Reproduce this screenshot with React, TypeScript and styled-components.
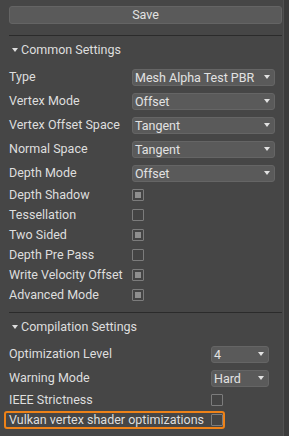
import styled, { createGlobalStyle } from "styled-components";

const GlobalStyle = createGlobalStyle`
  html, body {
    margin: 0;
    padding: 0;
    background: #464646;
  }
  body {
    font-family: Roboto, "Noto Sans", sans-serif;
    font-size: 12.5px;
    color: #dedede;
  }
`;

const Frame = styled.div`
  display: flex;
  flex-direction: row;
  width: 289px;
  height: 436px;
  overflow: hidden;
`;

const Panel = styled.div`
  display: flex;
  flex-direction: column;
  width: 273px;
  padding: 6px 1px 0 9px;
  background: #464646;
`;

const ScrollTrack = styled.div`
  width: 5px;
  background: #3b3b3b;
  border-left: 1px solid #505050;
`;

const SaveButton = styled.button`
  height: 18px;
  padding: 0;
  background: #5a5a5a;
  border: 1px solid #646464;
  border-radius: 3px;
  color: #e2e2e2;
  font-family: inherit;
  font-size: 12.5px;
  line-height: 16px;
`;

const Divider = styled.div<{ $top: number }>`
  height: 1px;
  margin-top: ${(p) => p.$top}px;
  background: #2b2b2b;
`;

const SectionHeader = styled.div`
  display: flex;
  align-items: center;
  height: 25px;
  margin-top: 1px;
  padding-left: 3px;
  gap: 3px;
`;

const Caret = styled.span`
  width: 0;
  height: 0;
  border-left: 3.5px solid transparent;
  border-right: 3.5px solid transparent;
  border-top: 4px solid #dedede;
`;

const Rows = styled.div`
  display: flex;
  flex-direction: column;
  align-items: flex-start;
  margin-top: 3px;
`;

const Row = styled.div<{ $tall?: boolean; $highlight?: boolean }>`
  display: flex;
  align-items: center;
  height: ${(p) => (p.$tall ? 24 : 20)}px;
  box-sizing: border-box;
  ${(p) =>
    p.$highlight &&
    `
    height: 18px;
    margin: 1px 0 0 -5px;
    padding-left: 3px;
    border: 2px solid #ee8218;
    border-radius: 3px;
  `}
`;

const Label = styled.span<{ $width: number }>`
  flex-shrink: 0;
  width: ${(p) => p.$width}px;
  white-space: nowrap;
  line-height: 16px;
`;

const Select = styled.div<{ $width: number }>`
  display: flex;
  align-items: center;
  justify-content: space-between;
  width: ${(p) => p.$width}px;
  height: 17px;
  box-sizing: border-box;
  padding: 0 4px 0 2px;
  background: #5a5a5a;
  border: 1px solid #656565;
  border-radius: 3px;
  color: #e2e2e2;
  line-height: 15px;
`;

const Arrow = styled.span`
  width: 0;
  height: 0;
  border-left: 3.5px solid transparent;
  border-right: 3.5px solid transparent;
  border-top: 4px solid #e2e2e2;
`;

const Check = styled.div<{ $on: boolean }>`
  display: flex;
  flex-shrink: 0;
  align-items: center;
  justify-content: center;
  width: 12px;
  height: 12px;
  box-sizing: border-box;
  border: 1px solid #7c7c7c;
  border-radius: 1px;
  background: #444444;
  &::after {
    content: "";
    display: ${(p) => (p.$on ? "block" : "none")};
    width: 6px;
    height: 6px;
    background: #8e8e8e;
  }
`;

type Field =
  | { label: string; kind: "select"; value: string }
  | { label: string; kind: "check"; value: boolean };

const common: Field[] = [
  { label: "Type", kind: "select", value: "Mesh Alpha Test PBR" },
  { label: "Vertex Mode", kind: "select", value: "Offset" },
  { label: "Vertex Offset Space", kind: "select", value: "Tangent" },
  { label: "Normal Space", kind: "select", value: "Tangent" },
  { label: "Depth Mode", kind: "select", value: "Offset" },
  { label: "Depth Shadow", kind: "check", value: true },
  { label: "Tessellation", kind: "check", value: false },
  { label: "Two Sided", kind: "check", value: true },
  { label: "Depth Pre Pass", kind: "check", value: false },
  { label: "Write Velocity Offset", kind: "check", value: true },
  { label: "Advanced Mode", kind: "check", value: true },
];

const compilation: Field[] = [
  { label: "Optimization Level", kind: "select", value: "4" },
  { label: "Warning Mode", kind: "select", value: "Hard" },
  { label: "IEEE Strictness", kind: "check", value: false },
  { label: "Vulkan vertex shader optimizations", kind: "check", value: false },
];

function FieldRow({
  field,
  labelWidth,
  selectWidth,
  highlight,
}: {
  field: Field;
  labelWidth: number;
  selectWidth: number;
  highlight?: boolean;
}) {
  return (
    <Row $tall={field.kind === "select"} $highlight={highlight}>
      <Label $width={labelWidth}>{field.label}</Label>
      {field.kind === "select" ? (
        <Select $width={selectWidth}>
          <span>{field.value}</span>
          <Arrow />
        </Select>
      ) : (
        <Check $on={field.value} />
      )}
    </Row>
  );
}

export default function App() {
  return (
    <Frame>
      <GlobalStyle />
      <Panel>
        <SaveButton>Save</SaveButton>
        <Divider $top={11} />
        <SectionHeader>
          <Caret />
          Common Settings
        </SectionHeader>
        <Rows>
          {common.map((f) => (
            <FieldRow key={f.label} field={f} labelWidth={123} selectWidth={143} />
          ))}
        </Rows>
        <Divider $top={7} />
        <SectionHeader>
          <Caret />
          Compilation Settings
        </SectionHeader>
        <Rows>
          {compilation.map((f, i) => (
            <FieldRow
              key={f.label}
              field={f}
              labelWidth={202}
              selectWidth={58}
              highlight={i === 3}
            />
          ))}
        </Rows>
      </Panel>
      <ScrollTrack />
    </Frame>
  );
}
